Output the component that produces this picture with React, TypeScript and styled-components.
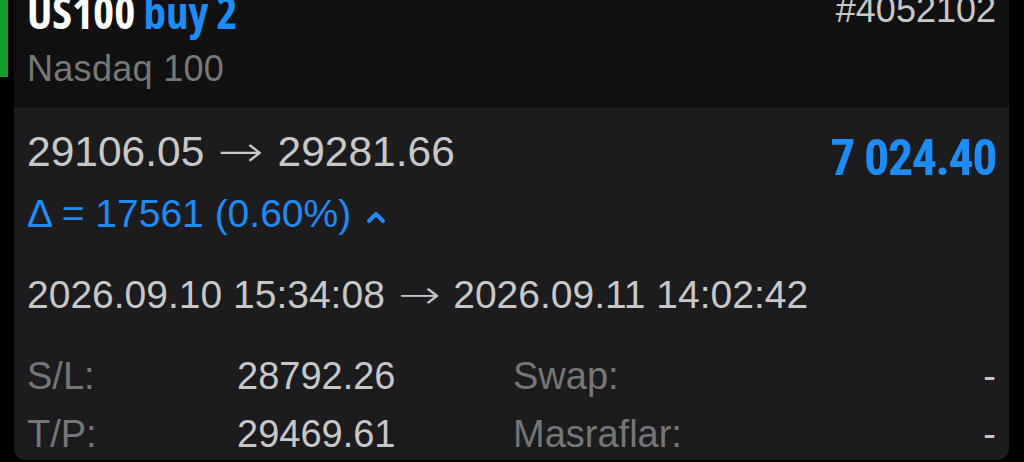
import styled, { createGlobalStyle } from "styled-components";

const GlobalStyle = createGlobalStyle`
  html, body {
    margin: 0;
    padding: 0;
    background: #000;
    font-family: "Liberation Sans", Arial, sans-serif;
    overflow: hidden;
  }
`;

const Page = styled.div`
  width: 1024px;
  height: 462px;
  display: flex;
  align-items: flex-start;
  gap: 6px;
  padding-right: 15px;
  box-sizing: border-box;
`;

const SideMark = styled.div`
  width: 8px;
  height: 77px;
  flex: none;
  background: #12a02a;
`;

const Card = styled.div`
  flex: 1;
  height: 460px;
  display: flex;
  flex-direction: column;
  border-radius: 0 0 12px 12px;
  overflow: hidden;
`;

const Header = styled.div`
  height: 107px;
  flex: none;
  background: #111111;
  padding: 0 13px;
  box-sizing: border-box;
`;

const Row = styled.div<{ $h?: number }>`
  display: flex;
  justify-content: space-between;
  align-items: flex-start;
  height: ${(p) => (p.$h ? `${p.$h}px` : "auto")};
`;

const Title = styled.div`
  font-family: "Open Sans", sans-serif;
  font-stretch: 75%;
  font-weight: 700;
  font-size: 45px;
  line-height: 40px;
  margin-top: -8px;
  color: #ffffff;
`;

const Side = styled.span`
  color: #1e8cf5;
`;

const Ticket = styled.div`
  font-size: 36px;
  line-height: 36px;
  margin-top: -8px;
  color: #c8c8c8;
`;

const SubTitle = styled.div`
  font-size: 36px;
  line-height: 40px;
  margin-top: 17px;
  letter-spacing: 0.3px;
  color: #787878;
`;

const Body = styled.div`
  flex: 1;
  background: #1c1c1e;
  padding: 21px 13px 0;
  box-sizing: border-box;
`;

const Prices = styled.div`
  font-size: 42.5px;
  line-height: 48px;
  color: #c8c8c8;
`;

const Arrow = styled.span`
  display: inline-block;
  font-family: "DejaVu Sans", sans-serif;
  font-weight: 200;
  margin: 0 7px;
  transform: scaleX(1.3);
`;

const Profit = styled.div`
  font-family: Roboto, sans-serif;
  font-stretch: 75%;
  font-weight: 700;
  font-size: 50px;
  line-height: 48px;
  letter-spacing: -1.5px;
  margin-top: 6px;
  color: #1e8cf5;
`;

const Delta = styled.div`
  display: flex;
  align-items: center;
  gap: 15px;
  font-size: 39px;
  line-height: 48px;
  margin-top: 14px;
  color: #1e8cf5;

  svg {
    margin-top: 6px;
  }
`;

const Times = styled.div`
  font-size: 39px;
  line-height: 48px;
  margin-top: 33px;
  color: #c8c8c8;
`;

const Details = styled.div`
  display: grid;
  grid-template-columns: 210px 276px 1fr auto;
  row-gap: 10px;
  margin-top: 33px;
  font-size: 38px;
  line-height: 48px;
`;

const Label = styled.div`
  color: #767676;
`;

const Value = styled.div<{ $end?: boolean }>`
  color: #c8c8c8;
  text-align: ${(p) => (p.$end ? "right" : "left")};
`;

const ChevronUp = () => (
  <svg width="20" height="14" viewBox="0 0 20 14">
    <path d="M3 11 L10 4 L17 11" fill="none" stroke="#1e8cf5" strokeWidth="4" strokeLinecap="round" strokeLinejoin="round" />
  </svg>
);

export default function App() {
  return (
    <>
      <GlobalStyle />
      <Page>
        <SideMark />
        <Card>
          <Header>
            <Row>
              <Title>
                US100 <Side>buy 2</Side>
              </Title>
              <Ticket>#4052102</Ticket>
            </Row>
            <SubTitle>Nasdaq 100</SubTitle>
          </Header>
          <Body>
            <Row $h={48}>
              <Prices>
                29106.05 <Arrow>→</Arrow> 29281.66
              </Prices>
              <Profit>7 024.40</Profit>
            </Row>
            <Delta>
              Δ = 17561 (0.60%) <ChevronUp />
            </Delta>
            <Times>
              2026.09.10 15:34:08 <Arrow>→</Arrow> 2026.09.11 14:02:42
            </Times>
            <Details>
              <Label>S/L:</Label>
              <Value>28792.26</Value>
              <Label>Swap:</Label>
              <Value $end>-</Value>
              <Label>T/P:</Label>
              <Value>29469.61</Value>
              <Label>Masraflar:</Label>
              <Value $end>-</Value>
            </Details>
          </Body>
        </Card>
      </Page>
    </>
  );
}
